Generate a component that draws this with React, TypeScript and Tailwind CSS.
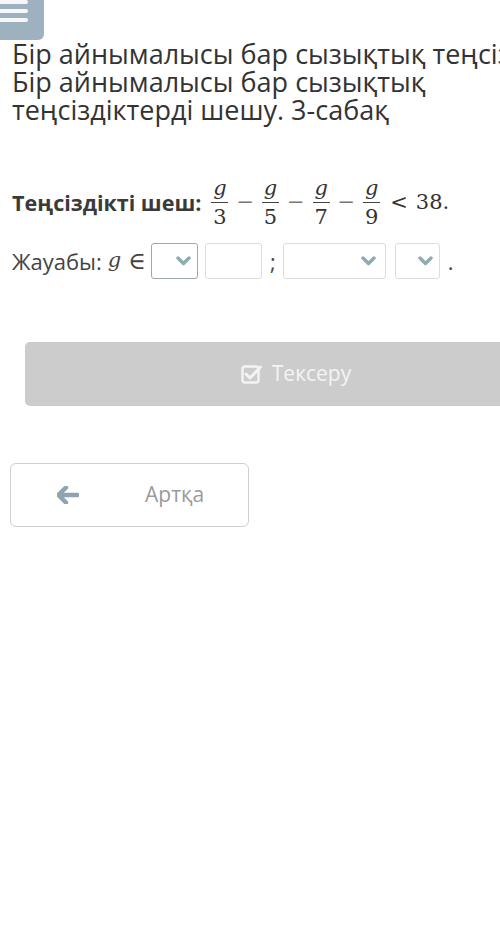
import React from 'react';

const font = { fontFamily: '"Open Sans", "Noto Sans", sans-serif' };
const serif = { fontFamily: '"DejaVu Serif", "Liberation Serif", serif' };

const Chevron: React.FC = () => (
    <svg width="15" height="10" viewBox="0 0 15 10" className="shrink-0">
        <polyline points="2,2 7.5,7.5 13,2" fill="none" stroke="#8eabb2" strokeWidth="3.4" strokeLinecap="round" strokeLinejoin="round" />
    </svg>
);

const Frac: React.FC<{ den: string }> = ({ den }) => (
    <span className="inline-flex flex-col items-center leading-none">
        <span className="italic pb-[3px]">g</span>
        <span className="block h-[1px] w-[17px] bg-[#444]" />
        <span className="pt-[4px]">{den}</span>
    </span>
);

const Minus = () => <span className="mx-[8px] text-[#777]">−</span>;

export default function App() {
    return (
        <div className="w-[500px] min-h-[937px] bg-white overflow-hidden text-[#333]" style={font}>
            {/* menu toggle */}
            <div className="w-[44px] h-[40px] bg-[#9db1bf] rounded-br-[6px] flex flex-col gap-[5px]">
                <span className="block w-[28px] h-[4px] bg-white/90 rounded-r-sm" />
                <span className="block w-[28px] h-[4px] bg-white/90 rounded-r-sm" />
                <span className="block w-[28px] h-[4px] bg-white/90 rounded-r-sm" />
            </div>

            <header className="px-[12px] text-[27px] leading-[28px] text-[#333]">
                <div className="whitespace-nowrap">Бір айнымалысы бар сызықтық теңсіздіктерді шешу</div>
                <h1>Бір айнымалысы бар сызықтық теңсіздіктерді шешу. 3-сабақ</h1>
            </header>

            {/* task */}
            <div className="mt-[54px] px-[12px] flex items-center">
                <span className="font-bold text-[21.5px] text-[#3a3a3a] mr-[10px]">Теңсіздікті шеш:</span>
                <span className="flex items-center text-[21px] text-[#333]" style={serif}>
                    <Frac den="3" />
                    <Minus />
                    <Frac den="5" />
                    <Minus />
                    <Frac den="7" />
                    <Minus />
                    <Frac den="9" />
                    <span className="ml-[10px] mr-[8px]">&lt;</span>
                    <span>38.</span>
                </span>
            </div>

            {/* answer */}
            <div className="mt-[15px] px-[12px] flex items-center text-[22px] text-[#444]">
                <span>Жауабы:</span>
                <span className="ml-[6px] italic text-[21px]" style={serif}>g</span>
                <span className="ml-[7px] text-[24px] leading-none" style={serif}>∈</span>
                <div className="ml-[5px] w-[47px] h-[36px] border border-[#9fa9ad] rounded-[3px] flex items-center justify-end pr-[6px]">
                    <Chevron />
                </div>
                <div className="ml-[7px] w-[57px] h-[36px] border border-[#dcdcdc] rounded-[3px]" />
                <span className="ml-[8px] mr-[7px]">;</span>
                <div className="w-[103px] h-[36px] border border-[#dcdcdc] rounded-[3px] flex items-center justify-end pr-[9px]">
                    <Chevron />
                </div>
                <div className="ml-[9px] w-[45px] h-[36px] border border-[#dcdcdc] rounded-[3px] flex items-center justify-end pr-[6px]">
                    <Chevron />
                </div>
                <span className="ml-[8px]">.</span>
            </div>

            <div className="mt-[63px] ml-[25px] w-[542px] h-[64px] bg-[#cccccc] rounded-[5px] flex items-center justify-center gap-[9px] text-[21px] text-[#f4f4f4]">
                <svg width="22" height="20" viewBox="0 0 22 20">
                    <rect x="1.5" y="2.5" width="16" height="16" rx="2.5" fill="none" stroke="#f4f4f4" strokeWidth="2.4" />
                    <polyline points="5,10 9,14 19.5,3" fill="none" stroke="#f4f4f4" strokeWidth="3" strokeLinejoin="round" strokeLinecap="round" />
                </svg>
                <span>Тексеру</span>
            </div>

            <div className="mt-[57px] ml-[10px] w-[239px] h-[64px] border border-[#cfcfcf] rounded-[6px] flex items-center text-[21px] text-[#9a9a9a]">
                <svg width="22" height="18" viewBox="0 0 22 18" className="ml-[46px]">
                    <path d="M9 1.5 L1.5 9 L9 16.5 M2 9 H20.5" fill="none" stroke="#8fa4b2" strokeWidth="4.5" strokeLinejoin="round" strokeLinecap="round" />
                </svg>
                <span className="ml-[66px]">Артқа</span>
            </div>
        </div>
    );
}
